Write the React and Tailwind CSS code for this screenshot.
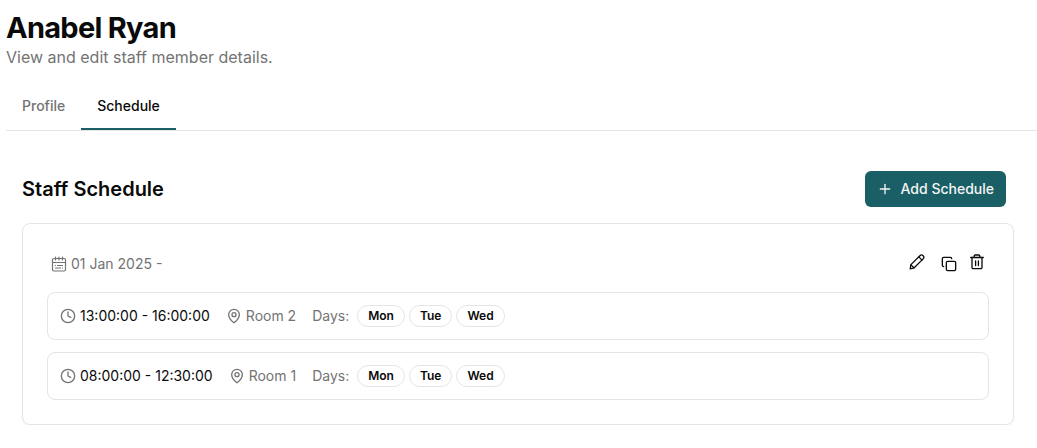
import { useState } from "react";
import { Clock, Copy, MapPin, Plus } from "lucide-react";

const slots = [
  { id: 1, time: "13:00:00 - 16:00:00", room: "Room 2", days: ["Mon", "Tue", "Wed"] },
  { id: 2, time: "08:00:00 - 12:30:00", room: "Room 1", days: ["Mon", "Tue", "Wed"] },
];

const tabs = ["Profile", "Schedule"];

/* --- icons --- */
function CalendarIcon() {
  return (
    <svg
      className="size-4"
      viewBox="0 0 16 16"
      fill="none"
      stroke="currentColor"
      strokeWidth="1.2"
      strokeLinecap="round"
      strokeLinejoin="round"
      aria-hidden="true"
    >
      <rect x="1.5" y="2.5" width="13" height="12.5" rx="1.5" />
      <path d="M1.5 6.5h13M4.5 1v3M8 1v3M11.5 1v3" />
      <path d="M6.5 9.5h5M4.3 9.5h.2M4.5 12h5M11.4 12h.2" />
    </svg>
  );
}

function PencilIcon() {
  return (
    <svg
      className="size-4"
      viewBox="0 0 16 16"
      fill="none"
      stroke="currentColor"
      strokeWidth="1.3"
      strokeLinecap="round"
      strokeLinejoin="round"
      aria-hidden="true"
    >
      <path d="M1.2 14.8l.7-4.2L10.900 1.700a1.900 1.900 0 0 1 3.200 3.200L5.200 13.800z" />
      <path d="M9.800 2.900l3.200 3.200M1.900 10.900l3.100 2.900" />
    </svg>
  );
}

function TrashIcon() {
  return (
    <svg
      className="size-4"
      viewBox="0 0 16 16"
      fill="none"
      stroke="currentColor"
      strokeWidth="1.3"
      strokeLinecap="round"
      strokeLinejoin="round"
      aria-hidden="true"
    >
      <path d="M1.7 3.5h12.6M5.2 3.5V2a1 1 0 0 1 1-1h3.6a1 1 0 0 1 1 1v1.5" />
      <path d="M3 3.5v10a1.2 1.2 0 0 0 1.2 1.2h7.6a1.2 1.2 0 0 0 1.2-1.2v-10M6.6 7v4.5M9.4 7v4.5" />
    </svg>
  );
}

function SlotRow({ slot }) {
  return (
    <li className="flex h-12 items-center gap-4 rounded-lg border border-neutral-200 px-3 text-sm">
      <span className="flex items-center gap-1">
        <Clock className="size-4 text-neutral-500" strokeWidth={2} />
        {slot.time}
      </span>
      <span className="flex items-center gap-1 text-neutral-500">
        <MapPin className="size-4" strokeWidth={2} />
        {slot.room}
      </span>
      <span className="flex items-center gap-2 text-neutral-500">
        Days:
        <span className="flex gap-1">
          {slot.days.map((day) => (
            <span
              key={day}
              className="rounded-full border border-neutral-200 px-2.5 py-0.5 text-xs font-semibold text-neutral-950"
            >
              {day}
            </span>
          ))}
        </span>
      </span>
    </li>
  );
}

export default function App() {
  const [active, setActive] = useState("Schedule");

  return (
    <main className="bg-white pt-[11px] pl-1.5 font-['Inter',sans-serif] text-neutral-950">
      <h1 className="text-[29px] leading-[34px] font-bold tracking-tight">Anabel Ryan</h1>
      <p className="leading-6 text-neutral-500">View and edit staff member details.</p>

      <div role="tablist" className="mt-[15px] flex border-b border-neutral-200">
        {tabs.map((tab) => (
          <button
            key={tab}
            type="button"
            role="tab"
            aria-selected={active === tab}
            onClick={() => setActive(tab)}
            className={`h-[46px] border-b-2 px-4 text-sm font-medium ${
              active === tab
                ? "border-[#1a5f66] text-neutral-950"
                : "border-transparent text-neutral-500"
            }`}
          >
            {tab}
          </button>
        ))}
      </div>

      <section className="mt-10 pr-[23px] pl-4">
        <div className="flex items-center justify-between pr-2">
          <h2 className="text-xl font-semibold">Staff Schedule</h2>
          <button
            type="button"
            className="flex h-9 items-center gap-2 rounded-md bg-[#1a5f66] px-3 text-sm font-medium text-neutral-100"
          >
            <Plus className="size-4" strokeWidth={2} />
            Add Schedule
          </button>
        </div>

        <div className="mt-4 rounded-lg border border-neutral-200 p-6 shadow-xs">
          <div className="flex h-8 items-center justify-between px-1">
            <span className="flex items-center gap-1 text-sm text-neutral-500">
              <CalendarIcon />
              01 Jan 2025 -
            </span>
            <div className="flex items-center gap-3">
              <button type="button" aria-label="Edit schedule" className="mr-1 pb-1">
                <PencilIcon />
              </button>
              <button type="button" aria-label="Duplicate schedule">
                <Copy className="size-4" strokeWidth={2} />
              </button>
              <button type="button" aria-label="Delete schedule" className="pb-1">
                <TrashIcon />
              </button>
            </div>
          </div>

          <ul className="mt-3 flex flex-col gap-3">
            {slots.map((slot) => (
              <SlotRow key={slot.id} slot={slot} />
            ))}
          </ul>
        </div>
      </section>
    </main>
  );
}
